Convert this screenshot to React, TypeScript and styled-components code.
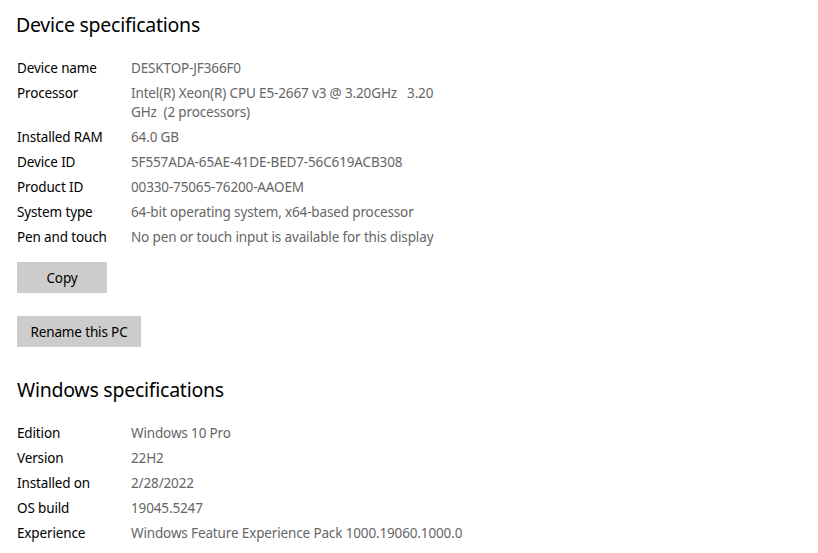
import React from "react"
import styled, { createGlobalStyle } from "styled-components"

type Spec = { label: string; value: string }

const deviceSpecs: Spec[] = [
  { label: "Device name", value: "DESKTOP-JF366F0" },
  {
    label: "Processor",
    value: "Intel(R) Xeon(R) CPU E5-2667 v3 @ 3.20GHz   3.20\nGHz  (2 processors)",
  },
  { label: "Installed RAM", value: "64.0 GB" },
  { label: "Device ID", value: "5F557ADA-65AE-41DE-BED7-56C619ACB308" },
  { label: "Product ID", value: "00330-75065-76200-AAOEM" },
  { label: "System type", value: "64-bit operating system, x64-based processor" },
  { label: "Pen and touch", value: "No pen or touch input is available for this display" },
]

const windowsSpecs: Spec[] = [
  { label: "Edition", value: "Windows 10 Pro" },
  { label: "Version", value: "22H2" },
  { label: "Installed on", value: "2/28/2022" },
  { label: "OS build", value: "19045.5247" },
  { label: "Experience", value: "Windows Feature Experience Pack 1000.19060.1000.0" },
]

const SpecList: React.FC<{ items: Spec[] }> = ({ items }) => (
  <List>
    {items.map(item => (
      <Row key={item.label}>
        <Label>{item.label}</Label>
        <Value>{item.value}</Value>
      </Row>
    ))}
  </List>
)

const App: React.FC = () => {
  return (
    <>
      <GlobalStyle />
      <Page>
        <Heading>Device specifications</Heading>
        <SpecList items={deviceSpecs} />
        <Actions>
          <Button>Copy</Button>
          <Button wide>Rename this PC</Button>
        </Actions>
        <Heading second>Windows specifications</Heading>
        <SpecList items={windowsSpecs} />
      </Page>
    </>
  )
}

const GlobalStyle = createGlobalStyle`
  html, body {
    margin: 0;
    padding: 0;
    background: #ffffff;
  }
  body {
    font-family: "Noto Sans", "Open Sans", sans-serif;
    -webkit-font-smoothing: antialiased;
  }
`

const Page = styled.div`
  width: 818px;
  height: 553px;
  overflow: hidden;
  padding: 10px 0 0 17px;
  box-sizing: border-box;
  display: flex;
  flex-direction: column;
  align-items: flex-start;
`

const Heading = styled.h2<{ second?: boolean }>`
  margin: ${p => (p.second ? "28px 0 0 0" : "0 0 0 -1px")};
  font-size: 19.5px;
  letter-spacing: -0.25px;
  font-weight: 400;
  line-height: 30px;
  color: #000;
`

const List = styled.div`
  margin-top: 19px;
  display: flex;
  flex-direction: column;
  gap: 6px;
`

const Row = styled.div`
  display: grid;
  grid-template-columns: 114px 360px;
  font-size: 13.5px;
  letter-spacing: -0.14px;
  line-height: 19px;
`

const Label = styled.span`
  color: #000;
`

const Value = styled.span`
  color: #666;
  white-space: pre-wrap;
`

const Actions = styled.div`
  margin-top: 15px;
  display: flex;
  flex-direction: column;
  align-items: flex-start;
  gap: 23px;
`

const Button = styled.button<{ wide?: boolean }>`
  height: 31px;
  width: ${p => (p.wide ? "124px" : "90px")};
  padding: 0;
  border: none;
  background: #cccccc;
  color: #000;
  font-family: inherit;
  font-size: 13.5px;
  letter-spacing: -0.14px;
`

export default App
